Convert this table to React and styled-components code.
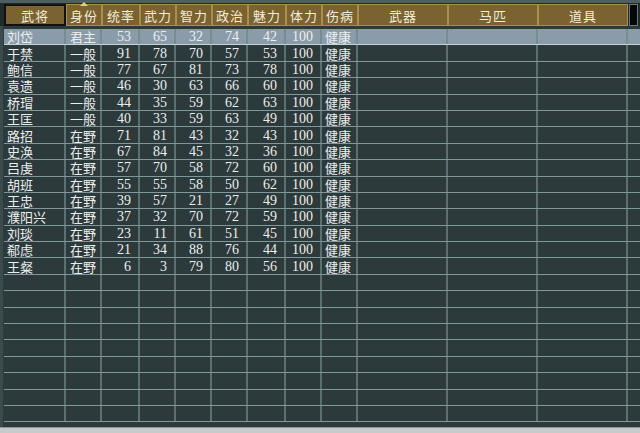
import styled, { createGlobalStyle } from "styled-components";

const GlobalStyle = createGlobalStyle`
  html, body {
    margin: 0;
    padding: 0;
    background: #2d3a3b;
  }
  body {
    font-family: "Liberation Serif", "Noto Sans CJK SC", serif;
    overflow: hidden;
  }
`;

const COLS = "62px 36px 38px 36px 36px 36px 38px 36px 36px 90px 90px 90px";

const headers = ["武将", "身份", "统率", "武力", "智力", "政治", "魅力", "体力", "伤病", "武器", "马匹", "道具"];

const officers = [
  ["刘岱", "君主", 53, 65, 32, 74, 42, 100, "健康"],
  ["于禁", "一般", 91, 78, 70, 57, 53, 100, "健康"],
  ["鲍信", "一般", 77, 67, 81, 73, 78, 100, "健康"],
  ["袁遗", "一般", 46, 30, 63, 66, 60, 100, "健康"],
  ["桥瑁", "一般", 44, 35, 59, 62, 63, 100, "健康"],
  ["王匡", "一般", 40, 33, 59, 63, 49, 100, "健康"],
  ["路招", "在野", 71, 81, 43, 32, 43, 100, "健康"],
  ["史涣", "在野", 67, 84, 45, 32, 36, 100, "健康"],
  ["吕虔", "在野", 57, 70, 58, 72, 60, 100, "健康"],
  ["胡班", "在野", 55, 55, 58, 50, 62, 100, "健康"],
  ["王忠", "在野", 39, 57, 21, 27, 49, 100, "健康"],
  ["濮阳兴", "在野", 37, 32, 70, 72, 59, 100, "健康"],
  ["刘琰", "在野", 23, 11, 61, 51, 45, 100, "健康"],
  ["郗虑", "在野", 21, 34, 88, 76, 44, 100, "健康"],
  ["王粲", "在野", 6, 3, 79, 80, 56, 100, "健康"],
];

const TOTAL_ROWS = 24;

const Screen = styled.div`
  width: 640px;
  height: 433px;
  display: flex;
  flex-direction: column;
  background: #2d3a3b;
  border-top: 3px solid #4f5f60;
  box-sizing: border-box;
`;

const HeaderBar = styled.div`
  display: flex;
  padding: 1px 0 0 4px;
  height: 22px;
  background: #222b2b;
`;

const HeaderGrid = styled.div`
  display: grid;
  grid-template-columns: ${COLS};
`;

const HeadCell = styled.div`
  position: relative;
  display: flex;
  align-items: center;
  justify-content: center;
  height: 20px;
  background: #7a6331;
  border: 1px solid ${(p) => (p.$lead ? "#111" : "#a8904a")};
  box-shadow: ${(p) => (p.$lead ? "inset 0 0 0 1px #111" : "none")};
  color: #f3ecd8;
  font-size: 13px;
  font-family: "Noto Sans CJK SC", sans-serif;
  letter-spacing: 1px;
`;

const SortMark = styled.span`
  position: absolute;
  top: -3px;
  left: 50%;
  margin-left: -4px;
  width: 0;
  height: 0;
  border-left: 4px solid transparent;
  border-right: 4px solid transparent;
  border-bottom: 4px solid #e9cf6a;
`;

const ScrollCap = styled.div`
  width: 7px;
  height: 20px;
  margin-left: 1px;
  background: #060808;
  border: 1px solid #6c7878;
`;

const Body = styled.div`
  flex: 1;
  padding: 3px 0 0 0;
  display: flex;
  flex-direction: column;
  border-left: 3px solid #3b4a4b;
`;

const Row = styled.div`
  display: grid;
  grid-template-columns: ${COLS} 8px;
  height: 16.4px;
  flex: none;
  margin-left: 1px;
  border-bottom: 1px solid ${(p) => (p.$selected ? "#c7d3d9" : "#82979a")};
  background: ${(p) => (p.$selected ? "#8a9ca9" : "transparent")};
  box-sizing: border-box;
`;

const Cell = styled.div`
  display: flex;
  align-items: center;
  justify-content: ${(p) => (p.$align === "right" ? "flex-end" : p.$align === "center" ? "center" : "flex-start")};
  padding: ${(p) => (p.$align === "right" ? "0 7px 0 0" : p.$align === "center" ? "0" : "0 0 0 3px")};
  border-right: 2px solid rgba(110, 136, 137, 0.7);
  color: #eceeee;
  font-size: ${(p) => (p.$num ? "14px" : "13px")};
  font-family: ${(p) => (p.$num ? '"Liberation Serif", serif' : '"Noto Sans CJK SC", sans-serif')};
  line-height: 15px;
  white-space: nowrap;
  min-width: 0;
`;

const Footer = styled.div`
  height: 5px;
  margin-top: auto;
  background: #c7ccc9;
  border-top: 1px solid #8d9896;
`;

const Spacer = styled.div``;

export default function App() {
  const rows = [];
  for (let i = 0; i < TOTAL_ROWS; i++) {
    const o = officers[i];
    rows.push(
      <Row key={i} $selected={i === 0}>
        <Cell>{o ? o[0] : ""}</Cell>
        <Cell $align="center">{o ? o[1] : ""}</Cell>
        {[2, 3, 4, 5, 6, 7].map((k) => (
          <Cell key={k} $align="right" $num>
            {o ? o[k] : ""}
          </Cell>
        ))}
        <Cell>{o ? o[8] : ""}</Cell>
        <Cell />
        <Cell />
        <Cell />
        <Spacer />
      </Row>
    );
  }

  return (
    <>
      <GlobalStyle />
      <Screen>
        <HeaderBar>
          <HeaderGrid>
            {headers.map((h, i) => (
              <HeadCell key={h} $lead={i === 0}>
                {i === 1 && <SortMark />}
                {h}
              </HeadCell>
            ))}
          </HeaderGrid>
          <ScrollCap />
        </HeaderBar>
        <Body>{rows}</Body>
        <Footer />
      </Screen>
    </>
  );
}
